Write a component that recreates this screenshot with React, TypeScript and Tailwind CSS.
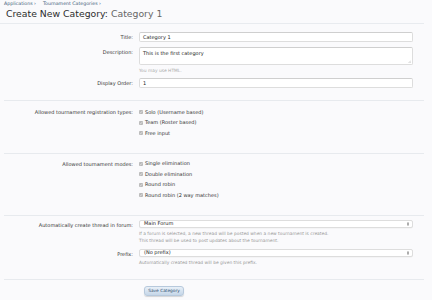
import type { ReactNode } from "react";

const font = { fontFamily: '"DejaVu Sans", "Liberation Sans", sans-serif' };

function Row({ label, children, className = "" }: { label: string; children: ReactNode; className?: string }) {
  return (
    <div className={`flex items-start ${className}`}>
      <div className="w-[134px] shrink-0 pr-[1px] text-right text-[5px] leading-[10px] text-[#333]">{label}</div>
      <div className="ml-[5px] w-[274px] shrink-0">{children}</div>
    </div>
  );
}

function Check({ label }: { label: string }) {
  return (
    <div className="flex h-[10.5px] items-center gap-[2px] text-[5px] text-[#333]">
      <span className="flex h-[4px] w-[4px] items-center justify-center rounded-[1px] bg-[#b9b9b9]">
        <svg viewBox="0 0 8 8" className="h-[4px] w-[4px]">
          <path d="M1.5 4.2 3.2 5.8 6.5 2.2" fill="none" stroke="#eee" strokeWidth="1.4" />
        </svg>
      </span>
      <span>{label}</span>
    </div>
  );
}

function Select({ value }: { value: string }) {
  return (
    <div className="flex h-[8px] items-center justify-between rounded-[2px] border border-[#ddd] bg-white pl-[4px] pr-[3px] text-[5px] text-[#222] shadow-[0_0.5px_0_#eee]">
      <span>{value}</span>
      <svg viewBox="0 0 4 8" className="h-[4px] w-[2px]">
        <path d="M0 3 2 0.5 4 3Z M0 5 2 7.5 4 5Z" fill="#333" />
      </svg>
    </div>
  );
}

const Sep = ({ className = "" }: { className?: string }) => (
  <div className={`ml-[4px] w-[420px] border-t border-[#e7eaee] ${className}`} />
);

export default function App() {
  return (
    <div className="h-[300px] w-[432px] overflow-hidden bg-[#fafafc] leading-none" style={font}>
      <div className="flex h-[6px] gap-[7px] pl-[4px] pt-[1px] text-[4.7px] leading-[5px] text-[#3b5a78]">
        <span>Applications ›</span>
        <span>Tournament Categories ›</span>
      </div>
      <h1 className="pl-[6px] pt-[2px] text-[9.3px] leading-[12px] text-[#2d2d2d]">
        Create New Category: <span className="text-[#666]">Category 1</span>
      </h1>
      <div className="mt-[3px] w-[424px] border-t border-[#e8ebef]" />

      <Row label="Title:" className="mt-[8px]">
        <div className="flex h-[10px] items-center rounded-[2px] border border-[#ddd] border-t-[#cfcfcf] bg-white pl-[3px] text-[5px] text-[#222]">
          Category 1
        </div>
      </Row>
      <Row label="Description:" className="mt-[5px]">
        <div className="relative h-[18px] rounded-[2px] border border-[#ddd] border-t-[#cfcfcf] bg-white pl-[3px] pt-[2px] text-[5px] leading-[6px] text-[#222]">
          This is the first category
          <svg viewBox="0 0 6 6" className="absolute bottom-[1px] right-[1px] h-[3px] w-[3px]">
            <path d="M6 1 1 6M6 3.5 3.5 6" stroke="#999" strokeWidth="0.8" />
          </svg>
        </div>
        <div className="h-[9px] pt-[3px] text-[4.4px] leading-[6px] text-[#aaa]">You may use HTML.</div>
      </Row>
      <Row label="Display Order:" className="mt-[4px]">
        <div className="flex h-[10px] items-center rounded-[2px] border border-[#ddd] border-t-[#cfcfcf] bg-white pl-[3px] text-[5px] text-[#222]">
          1
        </div>
      </Row>

      <Sep className="mt-[12px]" />

      <Row label="Allowed tournament registration types:" className="mt-[6px]">
        <Check label="Solo (Username based)" />
        <Check label="Team (Roster based)" />
        <Check label="Free input" />
      </Row>

      <Sep className="mt-[14px]" />

      <Row label="Allowed tournament modes:" className="mt-[5px]">
        <Check label="Single elimination" />
        <Check label="Double elimination" />
        <Check label="Round robin" />
        <Check label="Round robin (2 way matches)" />
      </Row>

      <Sep className="mt-[14px]" />

      <Row label="Automatically create thread in forum:" className="mt-[4px]">
        <Select value="Main Forum" />
        <div className="h-[16px] pt-[2px] text-[4.4px] leading-[7px] text-[#999]">
          <div>If a forum is selected, a new thread will be posted when a new tournament is created.</div>
          <div>This thread will be used to post updates about the tournament.</div>
        </div>
      </Row>
      <Row label="Prefix:" className="mt-[5px]">
        <Select value="(No prefix)" />
        <div className="h-[9px] pt-[2px] text-[4.4px] leading-[7px] text-[#999]">
          Automatically created thread will be given this prefix.
        </div>
      </Row>

      <Sep className="mt-[13px]" />

      <div className="ml-[144px] mt-[6px] flex">
        <button
          type="button"
          className="h-[10px] w-[40px] rounded-[3px] border border-[#b7c9dc] bg-gradient-to-b from-[#e8f0f8] to-[#c5d6e8] text-[4.3px] leading-[8px] text-[#2c4a6b] shadow-[0_1px_1px_rgba(0,0,0,0.15)]"
        >
          Save Category
        </button>
      </div>
    </div>
  );
}
